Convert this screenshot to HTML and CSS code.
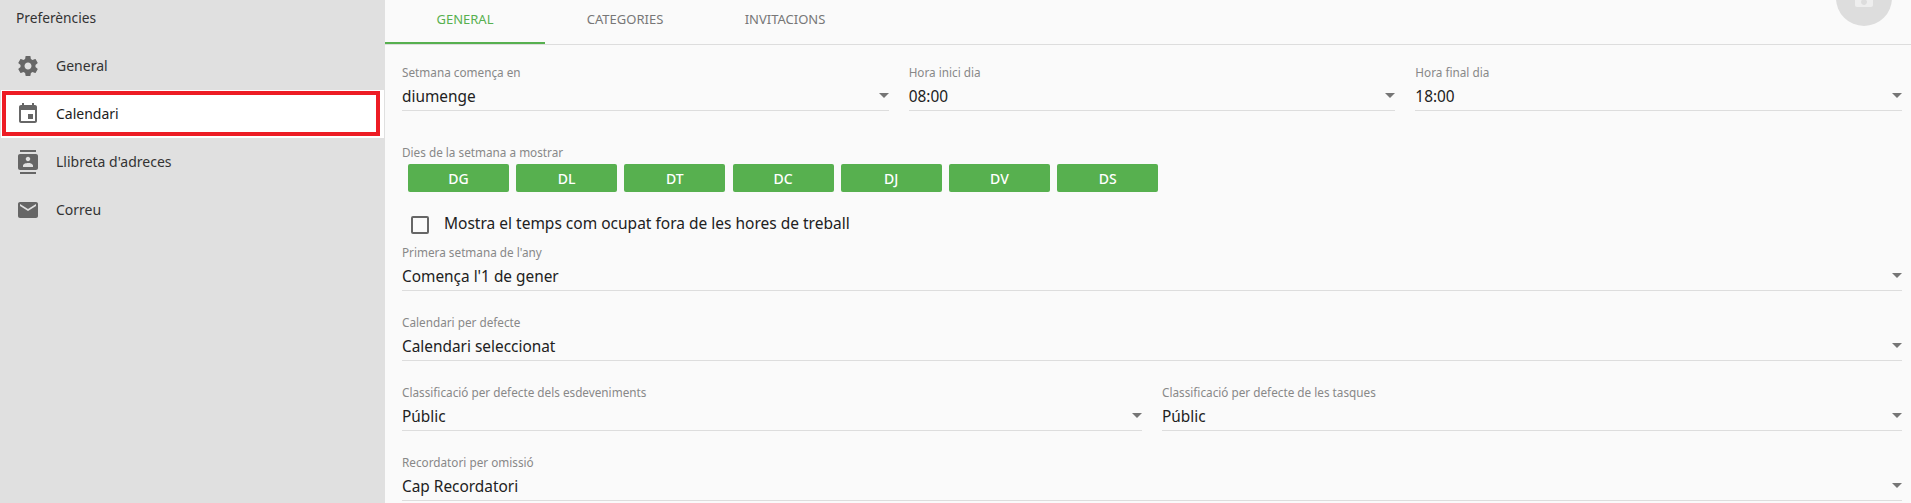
FILE: index.html
```html
<!DOCTYPE html>
<html lang="ca">
<head>
  <meta charset="UTF-8" />
  <title>Preferències</title>
  <link rel="stylesheet" href="styles.css">
</head>
<body>
  <div class="app">
    <aside class="sidebar">
      <div class="sidebar-title">Preferències</div>
      <nav class="menu">
        <a class="menu-item">
          <svg class="menu-icon" viewBox="0 0 24 24"><path d="M19.43 12.98c.04-.32.07-.64.07-.98s-.03-.66-.07-.98l2.11-1.65c.19-.15.24-.42.12-.64l-2-3.46c-.12-.22-.39-.3-.61-.22l-2.49 1c-.52-.4-1.08-.73-1.69-.98l-.38-2.65C14.46 2.18 14.25 2 14 2h-4c-.25 0-.46.18-.49.42l-.38 2.65c-.61.25-1.17.59-1.69.98l-2.49-1c-.23-.09-.49 0-.61.22l-2 3.46c-.13.22-.07.49.12.64l2.11 1.65c-.04.32-.07.65-.07.98s.03.66.07.98l-2.11 1.65c-.19.15-.24.42-.12.64l2 3.46c.12.22.39.3.61.22l2.49-1c.52.4 1.08.73 1.69.98l.38 2.65c.03.24.24.42.49.42h4c.25 0 .46-.18.49-.42l.38-2.65c.61-.25 1.17-.59 1.69-.98l2.49 1c.23.09.49 0 .61-.22l2-3.46c.12-.22.07-.49-.12-.64l-2.11-1.65zM12 15.5c-1.93 0-3.5-1.57-3.5-3.5s1.57-3.5 3.5-3.5 3.5 1.57 3.5 3.5-1.57 3.5-3.5 3.5z"/></svg>
          <span>General</span>
        </a>
        <a class="menu-item active">
          <svg class="menu-icon" viewBox="0 0 24 24"><path d="M17 12h-5v5h5v-5zM16 1v2H8V1H6v2H5c-1.11 0-1.99.9-1.99 2L3 19c0 1.1.89 2 2 2h14c1.1 0 2-.9 2-2V5c0-1.1-.9-2-2-2h-1V1h-2zm3 18H5V8h14v11z"/></svg>
          <span>Calendari</span>
        </a>
        <a class="menu-item">
          <svg class="menu-icon" viewBox="0 0 24 24"><path d="M20 0H4v2h16V0zM4 24h16v-2H4v2zM20 4H4c-1.1 0-2 .9-2 2v12c0 1.1.9 2 2 2h16c1.1 0 2-.9 2-2V6c0-1.1-.9-2-2-2zm-8 2.75c1.24 0 2.25 1.01 2.25 2.25s-1.01 2.25-2.25 2.25S9.75 10.24 9.75 9 10.76 6.75 12 6.75zM17 17H7v-1.5c0-1.67 3.33-2.5 5-2.5s5 .83 5 2.5V17z"/></svg>
          <span>Llibreta d'adreces</span>
        </a>
        <a class="menu-item">
          <svg class="menu-icon" viewBox="0 0 24 24"><path d="M20 4H4c-1.1 0-1.99.9-1.99 2L2 18c0 1.1.9 2 2 2h16c1.1 0 2-.9 2-2V6c0-1.1-.9-2-2-2zm0 4l-8 5-8-5V6l8 5 8-5v2z"/></svg>
          <span>Correu</span>
        </a>
      </nav>
    </aside>

    <main class="content">
      <div class="tabs">
        <div class="tab active">GENERAL</div>
        <div class="tab">CATEGORIES</div>
        <div class="tab">INVITACIONS</div>
      </div>

      <button class="save-btn">
        <svg viewBox="0 0 24 24"><path d="M17 3H5c-1.11 0-2 .9-2 2v14c0 1.1.89 2 2 2h14c1.1 0 2-.9 2-2V7l-4-4zm-5 16c-1.66 0-3-1.34-3-3s1.34-3 3-3 3 1.34 3 3-1.34 3-3 3zm3-10H5V5h10v4z"/></svg>
      </button>

      <div class="form">
        <div class="row thirds">
          <div class="field">
            <label>Setmana comença en</label>
            <div class="select">diumenge</div>
          </div>
          <div class="field">
            <label>Hora inici dia</label>
            <div class="select">08:00</div>
          </div>
          <div class="field">
            <label>Hora final dia</label>
            <div class="select">18:00</div>
          </div>
        </div>

        <div class="days-block">
          <label>Dies de la setmana a mostrar</label>
          <div class="days">
            <button class="day">DG</button>
            <button class="day">DL</button>
            <button class="day">DT</button>
            <button class="day">DC</button>
            <button class="day">DJ</button>
            <button class="day">DV</button>
            <button class="day">DS</button>
          </div>
        </div>

        <div class="check-row">
          <span class="checkbox"></span>
          Mostra el temps com ocupat fora de les hores de treball
        </div>

        <div class="field first-week">
          <label>Primera setmana de l'any</label>
          <div class="select">Comença l'1 de gener</div>
        </div>

        <div class="field spaced">
          <label>Calendari per defecte</label>
          <div class="select">Calendari seleccionat</div>
        </div>

        <div class="row halves spaced">
          <div class="field">
            <label>Classificació per defecte dels esdeveniments</label>
            <div class="select">Públic</div>
          </div>
          <div class="field">
            <label>Classificació per defecte de les tasques</label>
            <div class="select">Públic</div>
          </div>
        </div>

        <div class="field spaced">
          <label>Recordatori per omissió</label>
          <div class="select">Cap Recordatori</div>
        </div>
      </div>
    </main>
  </div>
</body>
</html>
```

FILE: styles.css
```css
* {
  box-sizing: border-box;
}

html, body {
  height: 100%;
  overflow: hidden;
}

body {
  margin: 0;
  background: #fafafa;
  font-family: "Noto Sans", "Liberation Sans", sans-serif;
  color: #212121;
}

.app {
  display: flex;
  height: 503px;
}

/* Sidebar */
.sidebar {
  width: 385px;
  flex-shrink: 0;
  background: #e0e0e0;
}

.sidebar-title {
  height: 42px;
  padding: 8px 16px 0;
  font-size: 13.75px;
  line-height: 20px;
  color: #333;
}

.menu-item {
  position: relative;
  display: flex;
  align-items: center;
  gap: 16px;
  height: 48px;
  padding-left: 16px;
  font-size: 14px;
  color: #333;
}

.menu-item span {
  margin-top: -2px;
}

.menu-item.active {
  margin: 0 1px;
  padding-left: 15px;
  background: #fff;
  color: #212121;
}

/* red frame around the selected entry */
.menu-item.active::after {
  content: "";
  position: absolute;
  top: 1px;
  left: 1px;
  right: 4px;
  bottom: 2px;
  border: 4px solid #ed1c24;
}

.menu-icon {
  width: 24px;
  height: 24px;
  fill: #666;
}

/* Tabs */
.content {
  position: relative;
  flex: 1;
  min-width: 0;
}

.tabs {
  display: flex;
  height: 45px;
  border-bottom: 1px solid #ddd;
}

.tab {
  width: 160px;
  height: 44px;
  padding-top: 9px;
  text-align: center;
  font-size: 13px;
  line-height: 20px;
  color: #777;
}

.tab.active {
  color: #57b04f;
  border-bottom: 2px solid #57b04f;
}

.save-btn {
  position: absolute;
  top: -30px;
  right: 19px;
  width: 56px;
  height: 56px;
  padding: 0;
  border: none;
  border-radius: 50%;
  background: #ddd;
}

.save-btn svg {
  display: block;
  width: 24px;
  height: 24px;
  margin: 16px;
  fill: #eee;
}

/* Form */
.form {
  padding: 20px 9px 0 17px;
}

.spaced {
  margin-top: 24px;
}

.row {
  display: grid;
  gap: 20px;
}

.thirds {
  grid-template-columns: repeat(3, 1fr);
}

.halves {
  grid-template-columns: repeat(2, 1fr);
}

label {
  display: block;
  height: 16px;
  font-size: 11.75px;
  line-height: 14px;
  color: #888;
}

.select {
  position: relative;
  height: 30px;
  padding-top: 4px;
  font-size: 15.4px;
  line-height: 24px;
  color: #212121;
  border-bottom: 1px solid #ddd;
}

.select::after {
  content: "";
  position: absolute;
  top: 12px;
  right: 0;
  border-left: 5px solid transparent;
  border-right: 5px solid transparent;
  border-top: 5px solid #757575;
}

.days-block {
  margin-top: 34px;
}

.days {
  display: flex;
  gap: 7.2px;
  margin: 3px 0 0 6px;
}

.day {
  width: 101px;
  height: 28px;
  padding: 0;
  border: none;
  border-radius: 2px;
  background: #57b04f;
  color: #fff;
  font-family: inherit;
  font-size: 14px;
  font-weight: 500;
}

.check-row {
  display: flex;
  align-items: center;
  gap: 15px;
  height: 24px;
  margin-top: 19px;
  padding-left: 9px;
  font-size: 15.5px;
  color: #212121;
}

.checkbox {
  width: 18px;
  height: 18px;
  margin-top: 4px;
  border: 2px solid #666;
  border-radius: 2px;
}

.first-week {
  margin-top: 10px;
}
```
